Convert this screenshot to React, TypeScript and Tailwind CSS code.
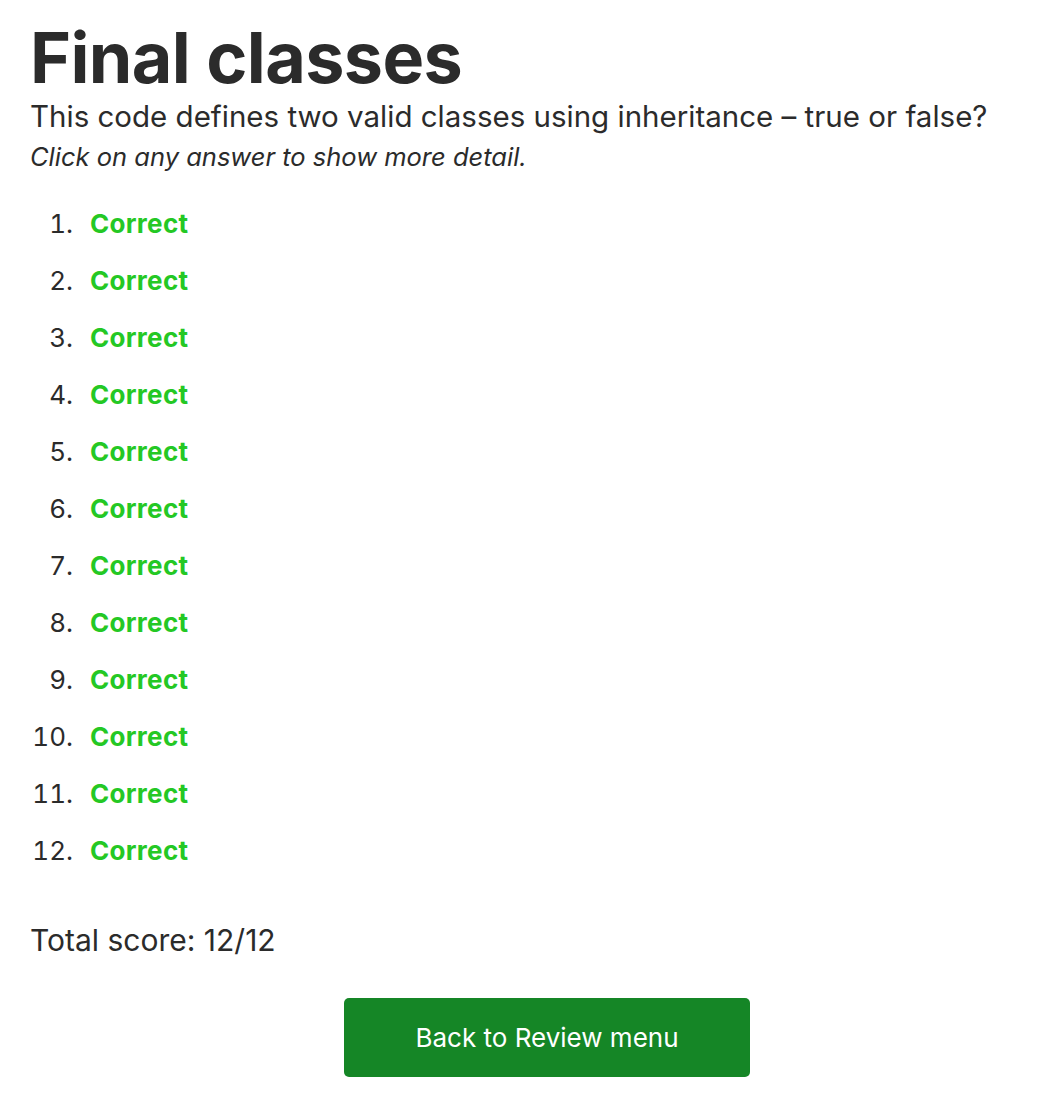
import React from "react";

const results = Array.from({ length: 12 }, (_, i) => ({ n: i + 1, ok: true }));

const App = () => {
  return (
    <div className="min-h-[1102px] bg-white px-[30px] pt-[18px] font-['Inter',sans-serif] text-[#2b2b2b]">
      <h1 className="text-[70px] font-bold leading-[80px] tracking-[-0.6px]">Final classes</h1>
      <p className="text-[29.5px] leading-[36px]">
        This code defines two valid classes using inheritance – true or false?
      </p>
      <p className="mt-[6px] text-[25.5px] italic leading-[34px]">Click on any answer to show more detail.</p>

      <ol className="mt-[21px] flex flex-col">
        {results.map((r) => (
          <li key={r.n} className="flex h-[57px] items-center text-[26px]">
            <span className="w-[43px] text-right tabular-nums">{r.n}.</span>
            <span className="ml-[17px] font-bold tracking-[0.3px] text-[#24c824]">Correct</span>
          </li>
        ))}
      </ol>

      <p className="mt-[42px] text-[30px] leading-[38px]">Total score: 12/12</p>

      <div className="mt-[39px] flex justify-center pl-[56px]">
        <button className="h-[79px] w-[406px] rounded-[5px] bg-[#158626] text-[26px] text-white">
          Back to Review menu
        </button>
      </div>
    </div>
  );
};

export default App;
